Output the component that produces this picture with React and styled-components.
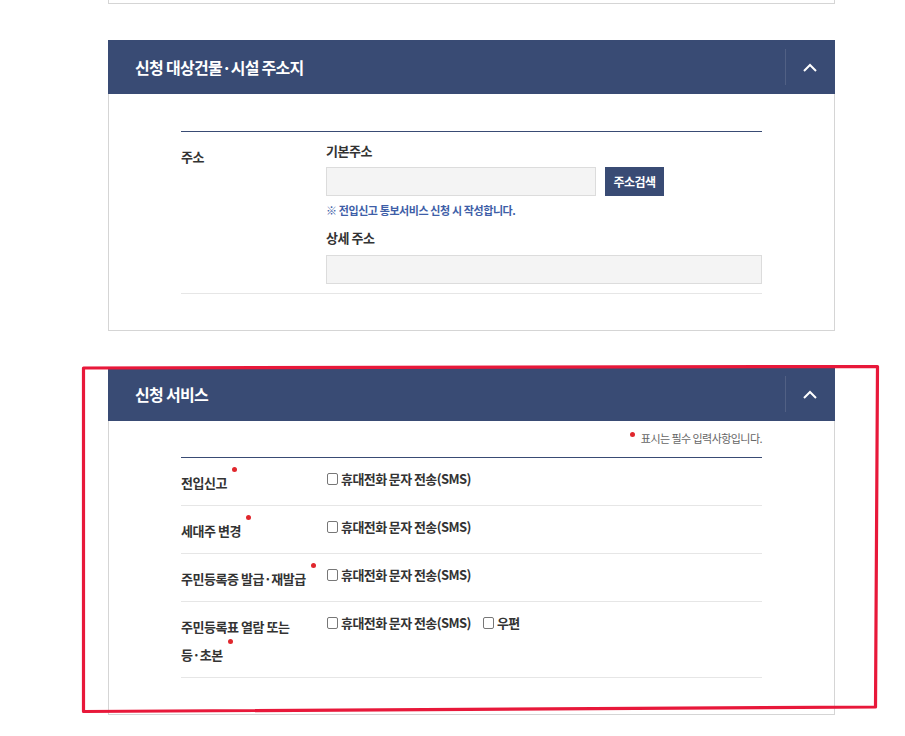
import React from "react";
import styled, { createGlobalStyle } from "styled-components";

const GlobalStyle = createGlobalStyle`
  html, body { margin: 0; padding: 0; background: #fff; }
  body { font-family: "Noto Sans CJK KR", "Noto Sans", sans-serif; color: #333; }
  * { box-sizing: border-box; }
`;

const NAVY = "#394b74";

const Page = styled.div`
  position: relative;
  width: 905px;
  min-height: 736px;
  overflow: hidden;
`;

const Column = styled.div`
  margin-left: 108px;
  width: 727px;
  display: flex;
  flex-direction: column;
  gap: 36px;
`;

const PrevPanel = styled.div`
  height: 4px;
  border: 1px solid #d5d5d5;
  border-top: none;
`;

const Section = styled.section`
  display: flex;
  flex-direction: column;
`;

const Header = styled.div`
  height: 54px;
  background: ${NAVY};
  display: flex;
  align-items: center;
  justify-content: space-between;
  padding-left: 27px;
`;

const Title = styled.h2`
  margin: 0;
  color: #fff;
  font-size: 16px;
  font-weight: 700;
  letter-spacing: -0.045em;
`;

const Toggle = styled.button`
  width: 50px;
  height: 36px;
  border: none;
  border-left: 1px solid rgba(255, 255, 255, 0.12);
  background: transparent;
  display: flex;
  align-items: center;
  justify-content: center;
  padding: 0 2px 0 0;
  cursor: pointer;
`;

const Body = styled.div`
  border: 1px solid #d5d5d5;
  border-top: none;
  padding: ${(p) => p.$top}px 72px 36px 72px;
`;

const Notice = styled.p`
  margin: 0 0 10px;
  text-align: right;
  font-size: 11px;
  line-height: 18px;
  color: #666;
  letter-spacing: -0.05em;
`;

const Table = styled.div`
  border-top: 1px solid ${NAVY};
`;

const Row = styled.div`
  display: grid;
  grid-template-columns: 145px 1fr;
  border-bottom: 1px solid #e6e6e6;
`;

const Label = styled.div`
  font-size: 13px;
  font-weight: 700;
  color: #333;
  letter-spacing: -0.035em;
  line-height: ${(p) => p.$lh}px;
  padding: ${(p) => p.$pad};
  word-break: keep-all;
`;

const NoWrap = styled.span`
  white-space: nowrap;
`;

const Required = styled.span`
  display: inline-block;
  width: 5px;
  height: 5px;
  border-radius: 50%;
  background: #e0272d;
  margin-left: ${(p) => (p.$lead ? 0 : 5)}px;
  margin-right: ${(p) => (p.$lead ? 6 : 0)}px;
  position: relative;
  top: ${(p) => (p.$lead ? -6 : -16)}px;
`;

const Cell = styled.div`
  padding: ${(p) => p.$pad};
  display: flex;
  flex-direction: ${(p) => (p.$col ? "column" : "row")};
  align-items: flex-start;
  gap: ${(p) => p.$gap || 0}px;
`;

const FieldTitle = styled.div`
  font-size: 13px;
  font-weight: 700;
  line-height: 16px;
  letter-spacing: -0.035em;
  color: #333;
  margin-top: ${(p) => p.$mt || 0}px;
`;

const InputRow = styled.div`
  display: flex;
  gap: 9px;
  margin-top: 8px;
`;

const TextInput = styled.input`
  width: ${(p) => p.$w};
  height: 29px;
  border: 1px solid #dcdcdc;
  background: #f4f4f4;
  margin: ${(p) => p.$m || 0};
  padding: 0 8px;
  font: inherit;
  display: block;
`;

const SearchButton = styled.button`
  width: 59px;
  height: 29px;
  border: none;
  background: ${NAVY};
  color: #fff;
  font-family: inherit;
  font-size: 12px;
  font-weight: 700;
  letter-spacing: -0.04em;
  padding: 0;
`;

const Hint = styled.div`
  margin-top: 6px;
  font-size: 11px;
  font-weight: 700;
  line-height: 16px;
  letter-spacing: -0.4px;
  color: #3e5ea7;
`;

const Check = styled.label`
  display: inline-flex;
  align-items: center;
  gap: 3px;
  font-size: 13px;
  font-weight: 700;
  line-height: 18px;
  letter-spacing: -0.045em;
  color: #333;
`;

const Box = styled.input.attrs({ type: "checkbox" })`
  appearance: none;
  margin: 0 0 0 1px;
  width: 11px;
  height: 12px;
  border: 1px solid #777;
  border-radius: 2px;
  background: #fff;
`;

const Overlay = styled.svg`
  position: absolute;
  left: 0;
  top: 0;
  pointer-events: none;
`;

const Chevron = () => (
  <svg width="14" height="9" viewBox="0 0 14 9">
    <path d="M1 8 L7 2 L13 8" fill="none" stroke="#fff" strokeWidth="2" />
  </svg>
);

const services = [
  { head: "", tail: "전입신고", post: false },
  { head: "", tail: "세대주 변경", post: false },
  { head: "", tail: "주민등록증 발급·재발급", post: false },
  { head: "주민등록표 열람 또는 ", tail: "등·초본", post: true },
];

export default function App() {
  return (
    <Page>
      <GlobalStyle />
      <Column>
        <PrevPanel />
        <Section>
          <Header>
            <Title>신청 대상건물·시설 주소지</Title>
            <Toggle aria-label="접기">
              <Chevron />
            </Toggle>
          </Header>
          <Body $top={37}>
            <Table>
              <Row>
                <Label $lh={16} $pad="17px 0 0">주소</Label>
                <Cell $col $pad="11px 0 9px">
                  <FieldTitle>기본주소</FieldTitle>
                  <InputRow>
                    <TextInput $w="270px" />
                    <SearchButton>주소검색</SearchButton>
                  </InputRow>
                  <Hint>※ 전입신고 통보서비스 신청 시 작성합니다.</Hint>
                  <FieldTitle $mt={12}>상세 주소</FieldTitle>
                  <TextInput $w="436px" $m="9px 0 0" />
                </Cell>
              </Row>
            </Table>
          </Body>
        </Section>
        <Section>
          <Header>
            <Title>신청 서비스</Title>
            <Toggle aria-label="접기">
              <Chevron />
            </Toggle>
          </Header>
          <Body $top={8}>
            <Notice>
              <Required $lead />
              표시는 필수 입력사항입니다.
            </Notice>
            <Table>
              {services.map((s) => (
                <Row key={s.tail}>
                  <Label $lh={28} $pad="11px 0 8px">
                    {s.head}
                    <NoWrap>
                      {s.tail}
                      <Required />
                    </NoWrap>
                  </Label>
                  <Cell $pad="12px 0" $gap={11}>
                    <Check>
                      <Box />
                      휴대전화 문자 전송(SMS)
                    </Check>
                    {s.post && (
                      <Check>
                        <Box />
                        우편
                      </Check>
                    )}
                  </Cell>
                </Row>
              ))}
            </Table>
          </Body>
        </Section>
      </Column>
      <Overlay width="905" height="736" viewBox="0 0 905 736">
        <polygon
          points="83.5,368 877.5,366.5 875.5,707 83.5,711.5"
          fill="none"
          stroke="#e8183a"
          strokeWidth="3.2"
          strokeLinejoin="round"
        />
      </Overlay>
    </Page>
  );
}
